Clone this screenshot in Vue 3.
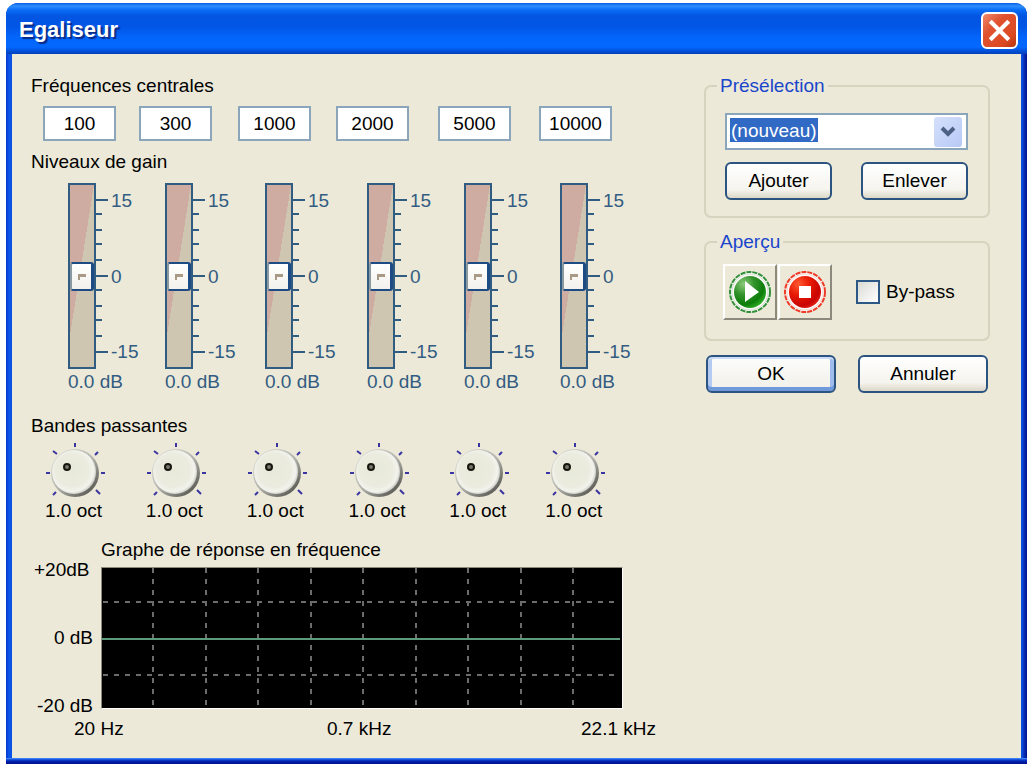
<script setup>
import { ref } from 'vue'

const frequencies = ref(['100', '300', '1000', '2000', '5000', '10000'])
const gains = ref([0, 0, 0, 0, 0, 0])
const bands = ref([1, 1, 1, 1, 1, 1])
const preset = ref('(nouveau)')
const bypass = ref(false)

const minorTicks = [31, 47, 61, 77, 107, 123, 137, 153]
const majorTicks = [17, 93, 169]
const gridX = [51, 104, 156, 209, 261, 314, 366, 419, 471]
const gridY = [34, 107]
</script>

<template>
  <main class="window">
    <header class="titlebar">
      <h1>Egaliseur</h1>
      <button class="close" type="button" aria-label="Fermer">
        <svg viewBox="0 0 32 32" aria-hidden="true"><path d="M7 7L25 25M25 7L7 25" /></svg>
      </button>
    </header>

    <div class="content">
      <section class="controls">
        <h2>Fréquences centrales</h2>
        <div class="freqs">
          <input v-for="(f, i) in frequencies" :key="i" v-model="frequencies[i]" type="text" class="freq" :aria-label="'Fréquence ' + (i + 1)">
        </div>

        <h2 class="gain-title">Niveaux de gain</h2>
        <div class="gains">
          <div v-for="(g, i) in gains" :key="i" class="gain">
            <div class="fader">
              <input v-model.number="gains[i]" type="range" min="-15" max="15" step="0.1" class="slider" :aria-label="'Gain ' + (i + 1)">
              <svg class="ticks" width="12" height="186" viewBox="0 0 12 186" aria-hidden="true">
                <rect v-for="t in minorTicks" :key="t" x="0" :y="t - 1" width="6" height="2" />
                <rect v-for="t in majorTicks" :key="t" x="0" :y="t - 1" width="12" height="2" />
              </svg>
              <div class="scale"><span>15</span><span>0</span><span>-15</span></div>
            </div>
            <output>{{ g.toFixed(1) }} dB</output>
          </div>
        </div>

        <h2 class="band-title">Bandes passantes</h2>
        <svg class="defs" width="0" height="0" aria-hidden="true">
          <defs>
            <linearGradient id="knobRim" x1="0.15" y1="0.1" x2="0.85" y2="0.9">
              <stop offset="0" stop-color="#d6d6d0" />
              <stop offset="0.5" stop-color="#b4b4ae" />
              <stop offset="1" stop-color="#5c5c56" />
            </linearGradient>
            <radialGradient id="knobFace" cx="0.46" cy="0.46" r="0.54">
              <stop offset="0" stop-color="#e7e9d9" />
              <stop offset="0.7" stop-color="#ebecdf" />
              <stop offset="0.9" stop-color="#f3f3ee" />
              <stop offset="1" stop-color="#d2d2cb" />
            </radialGradient>
          </defs>
        </svg>
        <div class="bands">
          <div v-for="(b, i) in bands" :key="i" class="band">
            <div class="knob">
              <svg width="62" height="60" viewBox="0 0 62 60" aria-hidden="true">
                <path class="knob-ticks" d="M30 3V7M8 11L12 14M53 12L50 15M1 33H5M56 33H60M8 55L11 52M51 50L55 54" />
                <circle cx="30" cy="33" r="24" fill="url(#knobRim)" />
                <circle cx="29" cy="32" r="22" fill="url(#knobFace)" />
                <circle cx="22" cy="27" r="3" fill="#77776e" stroke="#16160f" stroke-width="2" />
              </svg>
              <input v-model.number="bands[i]" type="range" min="0.1" max="4" step="0.1" :aria-label="'Bande ' + (i + 1)">
            </div>
            <output>{{ b.toFixed(1) }} oct</output>
          </div>
        </div>

        <div class="graph">
          <div class="y-axis"><span>+20dB</span><span>0 dB</span><span>-20 dB</span></div>
          <figure>
            <figcaption>Graphe de réponse en fréquence</figcaption>
            <svg class="plot" viewBox="0 0 520 140" preserveAspectRatio="none" aria-hidden="true">
              <path v-for="x in gridX" :key="'x' + x" class="grid" :d="`M${x} 0V140`" />
              <path v-for="y in gridY" :key="'y' + y" class="grid" :d="`M1 ${y}H518`" />
              <path class="curve" d="M0 71H518" />
            </svg>
          </figure>
        </div>
        <div class="x-axis"><span>20 Hz</span><span>0.7 kHz</span><span>22.1 kHz</span></div>
      </section>

      <aside class="side">
        <fieldset class="presets">
          <legend>Présélection</legend>
          <div class="combo">
            <select v-model="preset" aria-label="Présélection">
              <option>(nouveau)</option>
            </select>
            <span class="arrow">
              <svg width="16" height="12" viewBox="0 0 16 12" aria-hidden="true"><path d="M2 2L8 8L14 2" /></svg>
            </span>
          </div>
          <div class="row">
            <button class="btn small" type="button">Ajouter</button>
            <button class="btn small" type="button">Enlever</button>
          </div>
        </fieldset>

        <fieldset class="preview">
          <legend>Aperçu</legend>
          <div class="preview-row">
            <button class="tool" type="button" aria-label="Lecture">
              <svg width="46" height="46" viewBox="0 0 46 46" aria-hidden="true">
                <defs>
                  <radialGradient id="green" cx="0.3" cy="0.25" r="0.85">
                    <stop offset="0" stop-color="#8ccb7c" />
                    <stop offset="0.4" stop-color="#32922a" />
                    <stop offset="0.75" stop-color="#0d7d0b" />
                    <stop offset="1" stop-color="#38b52c" />
                  </radialGradient>
                </defs>
                <circle cx="23" cy="23" r="20" fill="#fbfcf8" stroke="#32903a" stroke-width="2" stroke-dasharray="5 1" />
                <circle cx="23" cy="23" r="18" fill="none" stroke="#d5ddce" stroke-width="1" />
                <circle cx="23" cy="23" r="16" fill="url(#green)" />
                <path d="M18 12L32 23L18 33Z" fill="#fff" />
              </svg>
            </button>
            <button class="tool" type="button" aria-label="Arrêt">
              <svg width="46" height="46" viewBox="0 0 46 46" aria-hidden="true">
                <defs>
                  <radialGradient id="red" cx="0.3" cy="0.25" r="0.85">
                    <stop offset="0" stop-color="#ff5a32" />
                    <stop offset="0.4" stop-color="#e91c05" />
                    <stop offset="0.8" stop-color="#c90303" />
                    <stop offset="1" stop-color="#e5281a" />
                  </radialGradient>
                </defs>
                <circle cx="23" cy="23" r="20" fill="#fffaf7" stroke="#ee3a26" stroke-width="2" stroke-dasharray="5 1" />
                <circle cx="23" cy="23" r="18" fill="none" stroke="#eed8d0" stroke-width="1" />
                <circle cx="23" cy="23" r="16" fill="url(#red)" />
                <rect x="17" y="17" width="12" height="12" fill="#fff" />
              </svg>
            </button>
            <label class="bypass"><input v-model="bypass" type="checkbox">By-pass</label>
          </div>
        </fieldset>

        <div class="actions">
          <button class="btn default" type="button">OK</button>
          <button class="btn" type="button">Annuler</button>
        </div>
      </aside>
    </div>
  </main>
</template>

<style>
body {
  background: #fff;
}
</style>

<style scoped>
.window {
  margin: 3px 2px 0 6px;
  border-radius: 12px 12px 0 0;
  background: linear-gradient(to right, #0a35cf 0, #0a58ea 3px, #0a50e0 6px, #0a50e0 calc(100% - 5px), #0930b8 calc(100% - 3px), #00138c 100%);
  font: 19px/22px "Liberation Sans", Arial, sans-serif;
  color: #000;
}
.window * {
  box-sizing: border-box;
}
.titlebar {
  display: flex;
  align-items: center;
  justify-content: space-between;
  height: 51px;
  padding: 3px 9px 0 13px;
  border-radius: 12px 12px 0 0;
  background: linear-gradient(#0a5be2 0, #2f90ff 3px, #0a6cf5 7px, #0355e1 13px, #0256e6 24px, #0365fb 34px, #0368ff 44px, #0250d8 48px, #0340b8 51px);
}
h1 {
  margin: 0;
  font-size: 22px;
  line-height: 26px;
  font-weight: bold;
  color: #fff;
  text-shadow: 2px 2px 1px #0a2a85;
}
.close {
  width: 37px;
  height: 37px;
  padding: 0;
  border: 2px solid #fff;
  border-radius: 6px;
  background: linear-gradient(135deg, #ee8a6d, #e0522f 35%, #dc4a22 75%, #b83510);
}
.close svg {
  display: block;
  width: 100%;
  stroke: #fff;
  stroke-width: 4;
  fill: none;
}
.content {
  display: grid;
  grid-template-columns: minmax(0, 1fr) 286px;
  gap: 37px;
  margin: 0 6px;
  padding: 21px 31px 18px 19px;
  background: #ece9d8;
}
.window::after {
  content: "";
  display: block;
  height: 6px;
  background: linear-gradient(#4a92ff, #0a3fd0 2px, #0019a0 4px, #00138c);
}
h2 {
  margin: 0;
  font: inherit;
}
.freqs {
  display: grid;
  grid-template-columns: 96fr 99fr 98fr 102fr 101fr 128fr;
  margin-top: 9px;
  padding-left: 12px;
}
.freq {
  width: 73px;
  height: 35px;
  padding: 0;
  border: 2px solid #8ba6ba;
  border-radius: 0;
  background: #fff;
  font: inherit;
  text-align: center;
}
.gain-title {
  margin-top: 10px;
}
.gains {
  display: grid;
  grid-template-columns: 97fr 100fr 102fr 97fr 96fr 107fr;
  margin-top: 10px;
  padding-left: 37px;
  color: #335c82;
}
.fader {
  display: flex;
  height: 186px;
}
.slider {
  appearance: none;
  writing-mode: vertical-lr;
  direction: rtl;
  width: 28px;
  height: 186px;
  margin: 0;
  border: 2px solid #2f5c80;
  background: linear-gradient(to bottom right, #cfaca2 50%, #cfc6b1 50%) no-repeat 0 0 / 100% 150px, #cfc6b1;
}
.slider::-webkit-slider-thumb {
  appearance: none;
  width: 24px;
  height: 29px;
  border: 2px solid #1d4b84;
  border-right-width: 3px;
  border-left-color: #8a9aa0;
  border-radius: 3px;
  background: linear-gradient(#a89a84, #a89a84) no-repeat 6px 10px / 8px 3px, linear-gradient(#a89a84, #a89a84) no-repeat 6px 10px / 2px 6px, linear-gradient(#fff, #f2f1ec);
}
.ticks {
  fill: #2f5c80;
}
.scale {
  display: flex;
  flex-direction: column;
  justify-content: space-between;
  padding: 7px 0 6px 3px;
}
output {
  display: block;
  white-space: nowrap;
}
.gain output {
  margin-top: 2px;
}
.band-title {
  margin-top: 22px;
}
.defs {
  display: block;
}
.bands {
  display: grid;
  grid-template-columns: 101fr 101fr 102fr 101fr 96fr 122fr;
  margin-top: 3px;
  padding-left: 14px;
}
.knob {
  position: relative;
  width: 62px;
  height: 60px;
}
.knob svg {
  display: block;
}
.knob input {
  position: absolute;
  inset: 0;
  width: 100%;
  height: 100%;
  margin: 0;
  opacity: 0;
}
.knob-ticks {
  stroke: #3a35a0;
  stroke-width: 2;
  fill: none;
}
.graph {
  display: grid;
  grid-template-columns: 70px minmax(0, 1fr);
  margin-top: 17px;
  padding-right: 44px;
}
.y-axis {
  display: flex;
  flex-direction: column;
  gap: 46px;
  align-items: flex-end;
  padding: 20px 8px 0 3px;
}
.y-axis span:first-child {
  align-self: flex-start;
}
figure {
  margin: 0;
}
.plot {
  display: block;
  width: 100%;
  height: 142px;
  margin-top: 6px;
  border: 1px solid;
  border-color: #8d8b7e #fff #fff #8d8b7e;
  background: #000;
}
.grid {
  stroke: #6c6c6c;
  stroke-width: 2;
  stroke-dasharray: 5 6;
}
.curve {
  stroke: #5c9c7c;
  stroke-width: 2;
}
.x-axis {
  display: grid;
  grid-template-columns: 253fr 254fr 86fr;
  margin-top: 1px;
  padding-left: 43px;
}
fieldset {
  min-width: 0;
  margin: 0;
  border: 2px solid #d6d3bf;
  border-radius: 7px;
}
legend {
  margin: 0;
  padding: 0 3px;
  color: #1a46cc;
}
.presets {
  padding: 16px 20px 16px 19px;
}
.presets legend {
  margin-left: -8px;
}
.combo {
  display: grid;
  grid-template-columns: 1fr 28px;
  align-items: center;
  height: 37px;
  padding-right: 4px;
  border: 2px solid #8ba6ba;
  background: #fff;
}
.combo select {
  grid-area: 1 / 1 / 2 / 3;
  appearance: none;
  width: 100%;
  height: 33px;
  margin: 0;
  padding: 0 0 1px 4px;
  border: 0;
  border-radius: 0;
  background: linear-gradient(#316ac5, #316ac5) no-repeat 3px 3px / 88px 24px;
  color: #fff;
  font: inherit;
}
.combo option {
  background: #fff;
  color: #000;
}
.arrow {
  grid-area: 1 / 2 / 2 / 3;
  display: flex;
  align-items: center;
  justify-content: center;
  height: 30px;
  border-radius: 3px;
  background: linear-gradient(135deg, #d5e0fb, #b7c9f5);
  pointer-events: none;
}
.arrow path {
  fill: none;
  stroke: #4d6185;
  stroke-width: 4;
}
.row,
.actions {
  display: flex;
  justify-content: space-between;
}
.row {
  margin-top: 12px;
}
.btn {
  width: 130px;
  height: 38px;
  padding: 0;
  border: 2px solid #2b5580;
  border-radius: 6px;
  background: linear-gradient(#fff, #f5f4ee 75%, #dcd8c8);
  color: #000;
  font: inherit;
}
.small {
  width: 107px;
}
.default {
  background: linear-gradient(#fdfdfb, #f0efe8);
  box-shadow: inset 0 2px #cbdcf8, inset 0 -4px #7099dc, inset 4px 0 #b3cbf3, inset -4px 0 #a0bcec;
}
.preview {
  margin-top: 13px;
  padding: 11px 0 19px 17px;
}
.preview legend {
  margin-left: -6px;
}
.preview-row {
  display: flex;
  align-items: center;
  gap: 1px;
}
.tool {
  display: flex;
  align-items: center;
  justify-content: center;
  width: 54px;
  height: 56px;
  padding: 0;
  border: 2px solid;
  border-color: #fff #8d897c #8d897c #fff;
  background: #ece9d8;
}
.bypass {
  display: flex;
  align-items: center;
  gap: 6px;
  margin-left: 23px;
}
.bypass input {
  appearance: none;
  width: 24px;
  height: 24px;
  margin: 0;
  border: 2px solid #2b5884;
  background: linear-gradient(135deg, #dadad4, #fff);
}
.bypass input:checked {
  background: #2b9a2b;
}
.actions {
  margin-top: 14px;
  padding: 0 2px;
}
</style>
